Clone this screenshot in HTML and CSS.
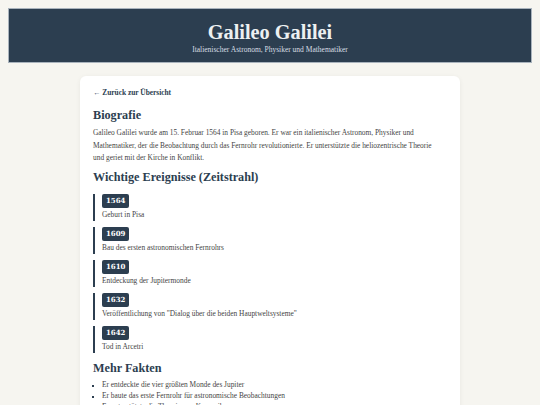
FILE: index.html
```html
<!DOCTYPE html>
<html lang="de">
<head>
<meta charset="utf-8">
<title>Galileo Galilei</title>
<link rel="stylesheet" href="styles.css">
</head>
<body>
<header class="hero">
  <h1 class="hero-title">Galileo Galilei</h1>
  <p class="hero-sub">Italienischer Astronom, Physiker und Mathematiker</p>
</header>
<main class="card">
  <a class="back" href="#">← Zurück zur Übersicht</a>
  <h2 class="sec-title">Biografie</h2>
  <p class="bio">Galileo Galilei wurde am 15. Februar 1564 in Pisa geboren. Er war ein italienischer Astronom, Physiker und Mathematiker, der die Beobachtung durch das Fernrohr revolutionierte. Er unterstützte die heliozentrische Theorie und geriet mit der Kirche in Konflikt.</p>
  <h2 class="sec-title">Wichtige Ereignisse (Zeitstrahl)</h2>
  <div class="timeline">
    <div class="event"><span class="year">1564</span><p class="event-text">Geburt in Pisa</p></div>
    <div class="event"><span class="year">1609</span><p class="event-text">Bau des ersten astronomischen Fernrohrs</p></div>
    <div class="event"><span class="year">1610</span><p class="event-text">Entdeckung der Jupitermonde</p></div>
    <div class="event"><span class="year">1632</span><p class="event-text">Veröffentlichung von "Dialog über die beiden Hauptweltsysteme"</p></div>
    <div class="event"><span class="year">1642</span><p class="event-text">Tod in Arcetri</p></div>
  </div>
  <h2 class="sec-title">Mehr Fakten</h2>
  <ul class="facts">
    <li>Er entdeckte die vier größten Monde des Jupiter</li>
    <li>Er baute das erste Fernrohr für astronomische Beobachtungen</li>
    <li>Er unterstützte die Theorie von Kopernikus</li>
  </ul>
</main>
</body>
</html>
```
FILE: styles.css
```css
* { box-sizing: border-box; }
html, body { margin: 0; }
body {
  background: #f6f5f0;
  padding: 8px;
  font-family: Georgia, "Liberation Serif", serif;
  color: #454545;
  font-size: 7.4px;
}
.hero {
  background: #2c3e50;
  border: 1px solid #a9b3bd;
  height: 55px;
  padding-top: 11px;
  text-align: center;
  color: #ecf0f1;
}
.hero-title {
  margin: 0;
  font-size: 20.3px;
  line-height: 24px;
  font-weight: bold;
}
.hero-sub {
  margin: 0;
  font-size: 7.5px;
  line-height: 12px;
  color: #d8dfe5;
}
.card {
  width: 380px;
  margin: 13px auto 0;
  background: #fff;
  border-radius: 6px;
  box-shadow: 0 1px 5px rgba(0,0,0,0.06);
  padding: 11px 17px 20px 13px;
}
.back {
  display: block;
  color: #2c3e50;
  font-weight: bold;
  text-decoration: none;
  font-size: 7.4px;
  line-height: 12px;
}
.sec-title {
  margin: 8px 0 0;
  font-size: 12.2px;
  line-height: 16px;
  color: #2c3e50;
  font-weight: bold;
}
.bio {
  margin: 4px 0 0;
  line-height: 12.5px;
}
.bio + .sec-title { margin-top: 4px; }
.timeline { margin-top: 9px; }
.event {
  border-left: 2px solid #2c3e50;
  padding-left: 7px;
  margin-bottom: 6px;
}
.year {
  display: inline-block;
  background: #2c3e50;
  color: #fff;
  font-family: "DejaVu Serif", serif;
  font-weight: bold;
  font-size: 7px;
  line-height: 14px;
  padding: 0 4px;
  border-radius: 2px;
}
.event-text {
  margin: 1px 0 0;
  line-height: 12px;
}
.timeline + .sec-title { margin-top: 7px; }
.facts {
  margin: 3px 0 0;
  padding-left: 9px;
  list-style: square;
  line-height: 11px;
}
.facts li::marker { color: #2c3e50; font-size: 6px; }
```
